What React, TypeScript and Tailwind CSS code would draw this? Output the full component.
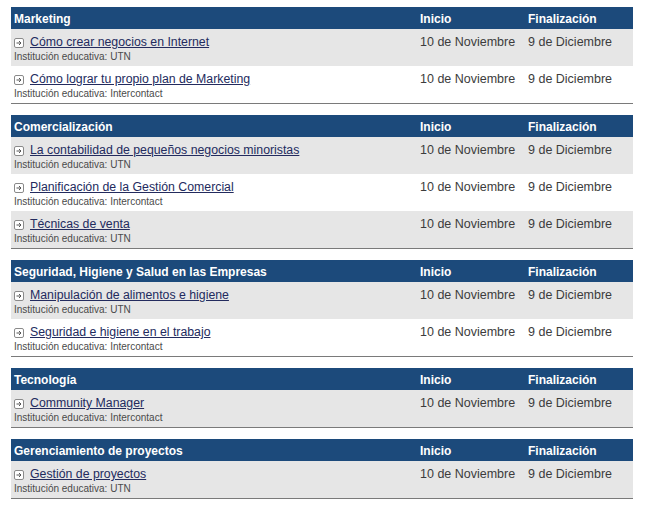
// Listado de cursos agrupados por área, con fechas de inicio y finalización.

type Curso = { titulo: string; institucion: string };
type Area = { nombre: string; cursos: Curso[] };

const areas: Area[] = [
  {
    nombre: "Marketing",
    cursos: [
      { titulo: "Cómo crear negocios en Internet", institucion: "UTN" },
      { titulo: "Cómo lograr tu propio plan de Marketing", institucion: "Intercontact" },
    ],
  },
  {
    nombre: "Comercialización",
    cursos: [
      { titulo: "La contabilidad de pequeños negocios minoristas", institucion: "UTN" },
      { titulo: "Planificación de la Gestión Comercial", institucion: "Intercontact" },
      { titulo: "Técnicas de venta", institucion: "UTN" },
    ],
  },
  {
    nombre: "Seguridad, Higiene y Salud en las Empresas",
    cursos: [
      { titulo: "Manipulación de alimentos e higiene", institucion: "UTN" },
      { titulo: "Seguridad e higiene en el trabajo", institucion: "Intercontact" },
    ],
  },
  {
    nombre: "Tecnología",
    cursos: [{ titulo: "Community Manager", institucion: "Intercontact" }],
  },
  {
    nombre: "Gerenciamiento de proyectos",
    cursos: [{ titulo: "Gestión de proyectos", institucion: "UTN" }],
  },
];

function ArrowBox() {
  return (
    <svg width="10" height="10" viewBox="0 0 10 10" className="shrink-0">
      <rect x="0.5" y="0.5" width="9" height="9" rx="1.5" fill="#fff" stroke="#8a8a8a" />
      <path d="M2.5 5h4.5M5 3l2 2-2 2" fill="none" stroke="#555" strokeWidth="1" />
    </svg>
  );
}

export default function App() {
  return (
    <div
      className="min-h-[509px] bg-white pt-[7px] pl-[11px]"
      style={{ fontFamily: '"Liberation Sans", Arial, sans-serif' }}
    >
      <div className="w-[622px] flex flex-col gap-[11px]">
        {areas.map((area) => (
          <div key={area.nombre} className="border-b border-[#7a7a7a]">
            <div className="grid grid-cols-[409px_108px_1fr] h-[22px] pt-[1px] items-center bg-[#1c4a7b] text-white text-[12px] font-bold">
              <span className="pl-[3px]">{area.nombre}</span>
              <span>Inicio</span>
              <span>Finalización</span>
            </div>
            {area.cursos.map((curso, i) => (
              <div
                key={curso.titulo}
                className={`grid grid-cols-[409px_108px_1fr] h-[37px] pt-[6px] ${
                  i % 2 === 0 ? "bg-[#e6e6e6]" : "bg-white"
                }`}
              >
                <div className="pl-[3px]">
                  <div className="flex items-center gap-[6px] h-[15px]">
                    <ArrowBox />
                    <a href="#" className="text-[12.3px] leading-[15px] text-[#232b5e] underline">
                      {curso.titulo}
                    </a>
                  </div>
                  <div className="text-[10px] leading-[13px] text-[#4a4a4a]">
                    Institución educativa: {curso.institucion}
                  </div>
                </div>
                <span className="text-[12.5px] leading-[15px] text-[#3c3c3c]">10 de Noviembre</span>
                <span className="text-[12.5px] leading-[15px] text-[#3c3c3c]">9 de Diciembre</span>
              </div>
            ))}
          </div>
        ))}
      </div>
    </div>
  );
}
